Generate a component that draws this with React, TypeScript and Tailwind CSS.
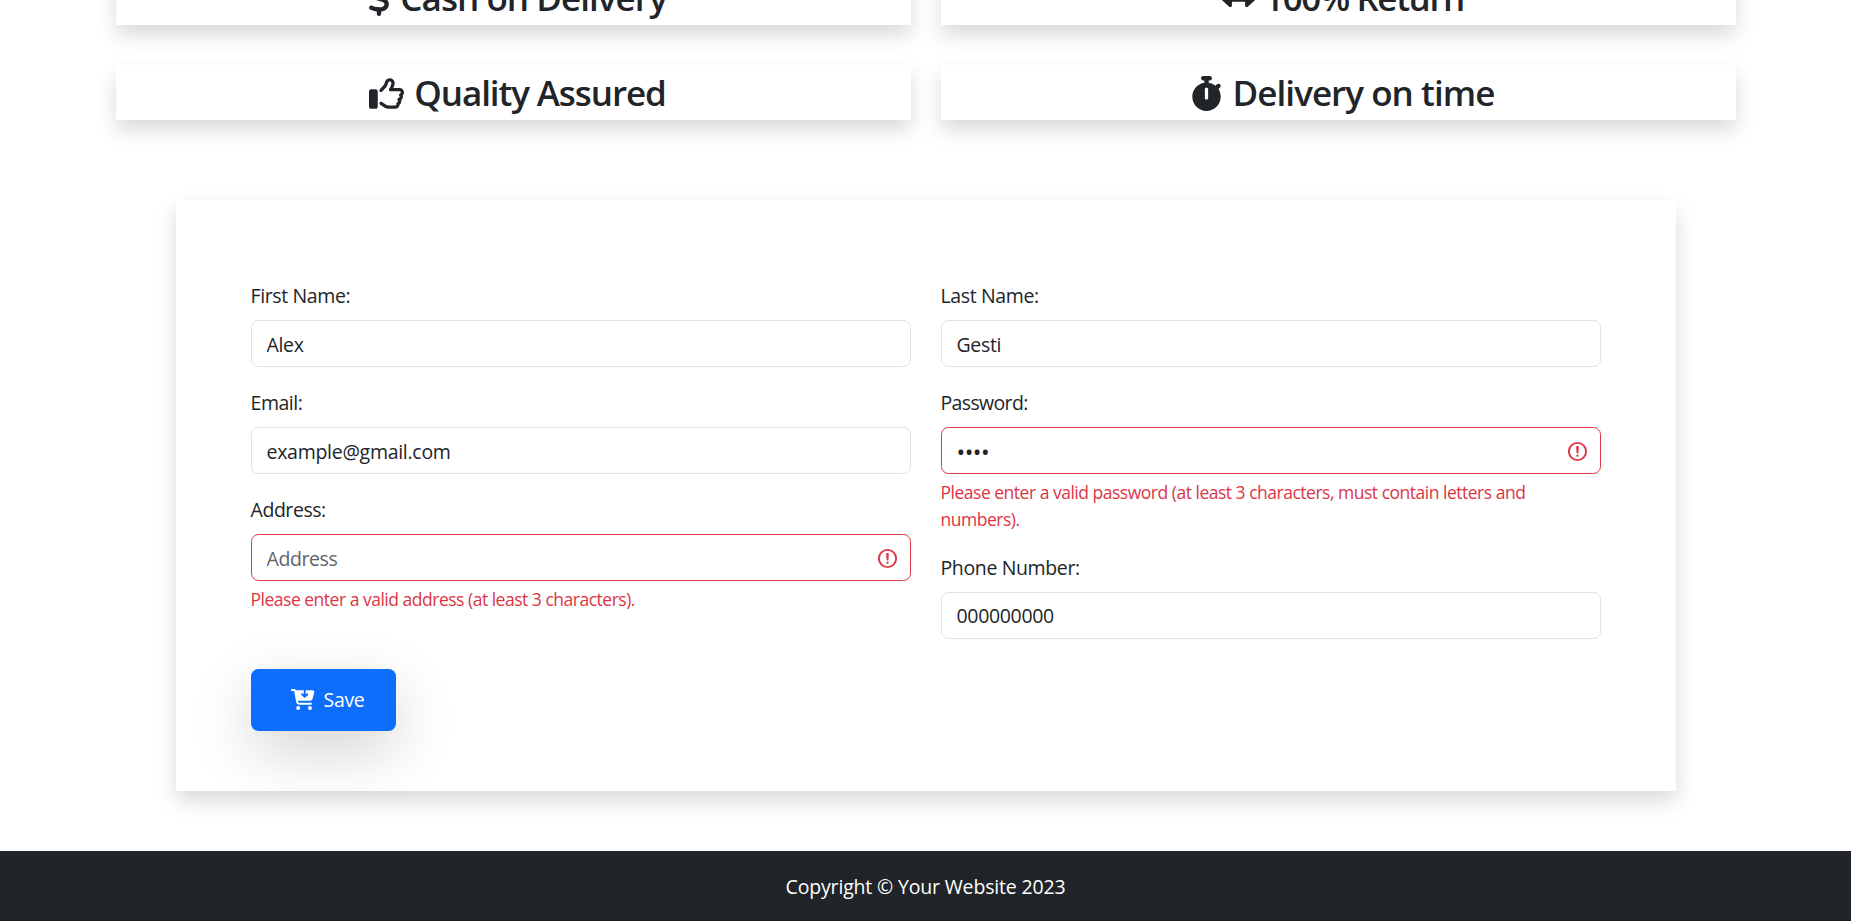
import { FaCartArrowDown, FaDollarSign, FaLeftRight, FaRegThumbsUp, FaStopwatch } from "react-icons/fa6";
import type { IconType } from "react-icons";

function Feature({ icon: Icon, iconClass, text, textClass }: { icon: IconType; iconClass: string; text: string; textClass: string }) {
  return (
    <div className="flex h-[55px] items-center justify-center bg-white pl-2 text-[35px] font-semibold leading-[42px] shadow-[0_10px_20px_rgba(0,0,0,0.15)]">
      <Icon className={`mt-px h-[35px] shrink-0 ${iconClass}`} />
      <span className={`inline-block whitespace-nowrap ${textClass}`}>{text}</span>
    </div>
  );
}

function AlertIcon() {
  return (
    <svg viewBox="0 0 12 12" fill="none" stroke="#dc3545" className="absolute right-[12px] top-[13px] size-[23px]">
      <circle cx="6" cy="6" r="4.5" />
      <path strokeLinejoin="round" d="M5.8 3.6h.4L6 6.5z" />
      <circle cx="6" cy="8.2" r=".6" fill="#dc3545" stroke="none" />
    </svg>
  );
}

type FieldProps = {
  label: string;
  labelClass?: string;
  value?: string;
  placeholder?: string;
  type?: string;
  inputClass?: string;
  error?: string[];
};

function Field({ label, labelClass = "tracking-[-0.37px]", value, placeholder, type = "text", inputClass = "pt-[2px] tracking-[-0.33px]", error }: FieldProps) {
  return (
    <div className="mb-5">
      <label className={`-ml-[0.5px] mb-[9px] block h-[31px] leading-[32px] ${labelClass}`}>{label}</label>
      <div className="relative">
        <input
          type={type}
          defaultValue={value}
          placeholder={placeholder}
          className={`block h-[47px] w-full rounded-[7.5px] border bg-white pl-[14.5px] pr-12 outline-none placeholder:text-[#5f6469] ${error ? "border-[#dc3545]" : "border-[#dee2e6]"} ${inputClass}`}
        />
        {error && <AlertIcon />}
      </div>
      {error && (
        <div className="-ml-[0.5px] mt-[5px] text-[17.5px] leading-[26.5px] tracking-[-0.49px] text-[#dc3545]">
          {error.map((line) => (
            <div key={line} className="whitespace-nowrap">{line}</div>
          ))}
        </div>
      )}
    </div>
  );
}

export default function App() {
  return (
    <div className="flex h-[921px] w-[1851px] flex-col overflow-hidden bg-white font-['Open_Sans','Noto_Sans',sans-serif] text-[19.5px] text-[#212529]">
      <div className="-mt-[30px] ml-[116px] grid w-[1620px] shrink-0 grid-cols-2 gap-x-[30px] gap-y-10">
        <Feature icon={FaDollarSign} iconClass="w-[22px]" text="Cash on Delivery" textClass="ml-[10px] tracking-[-0.95px]" />
        <Feature icon={FaLeftRight} iconClass="w-[35px]" text="100% Return" textClass="ml-2 tracking-[-1.4px]" />
        <Feature icon={FaRegThumbsUp} iconClass="w-[35px]" text="Quality Assured" textClass="ml-[10px] tracking-[-1.1px]" />
        <Feature icon={FaStopwatch} iconClass="w-[31px]" text="Delivery on time" textClass="ml-[11px] tracking-[-0.95px]" />
      </div>

      <form className="ml-[176px] mt-20 h-[591px] w-[1500px] shrink-0 bg-white px-[75px] pt-20 shadow-[0_10px_20px_rgba(0,0,0,0.15)]">
        <div className="grid h-[389px] grid-cols-2 gap-x-[30px]">
          <div>
            <Field label="First Name:" value="Alex" />
            <Field label="Email:" labelClass="tracking-[-0.45px]" value="example@gmail.com" inputClass="pt-[2px] tracking-[-0.28px]" />
            <Field label="Address:" labelClass="tracking-[-0.44px]" placeholder="Address" inputClass="pt-[2px] tracking-[-0.4px]" error={["Please enter a valid address (at least 3 characters)."]} />
          </div>
          <div>
            <Field label="Last Name:" value="Gesti" />
            <Field
              label="Password:"
              labelClass="tracking-[-0.65px]"
              value="0000"
              type="password"
              inputClass="pt-[2px] text-[23px] tracking-[-0.5px]"
              error={["Please enter a valid password (at least 3 characters, must contain letters and", "numbers)."]}
            />
            <Field label="Phone Number:" value="000000000" inputClass="tracking-[-0.33px]" />
          </div>
        </div>
        <button
          type="button"
          className="flex h-[62px] w-[145px] items-center rounded-[7.5px] bg-[#0d6efd] pl-10 text-white shadow-[0_20px_60px_rgba(0,0,0,0.175)]"
        >
          <FaCartArrowDown className="-mt-px h-[21px] w-[23.5px]" />
          <span className="ml-[9px] tracking-[-0.3px]">Save</span>
        </button>
      </form>

      <footer className="mt-[60px] flex h-[70px] shrink-0 items-center justify-center border-b border-[#1a1d20] bg-[#212529] pt-[3px] text-white">
        <p className="tracking-[-0.17px]">Copyright © Your Website 2023</p>
      </footer>
    </div>
  );
}
